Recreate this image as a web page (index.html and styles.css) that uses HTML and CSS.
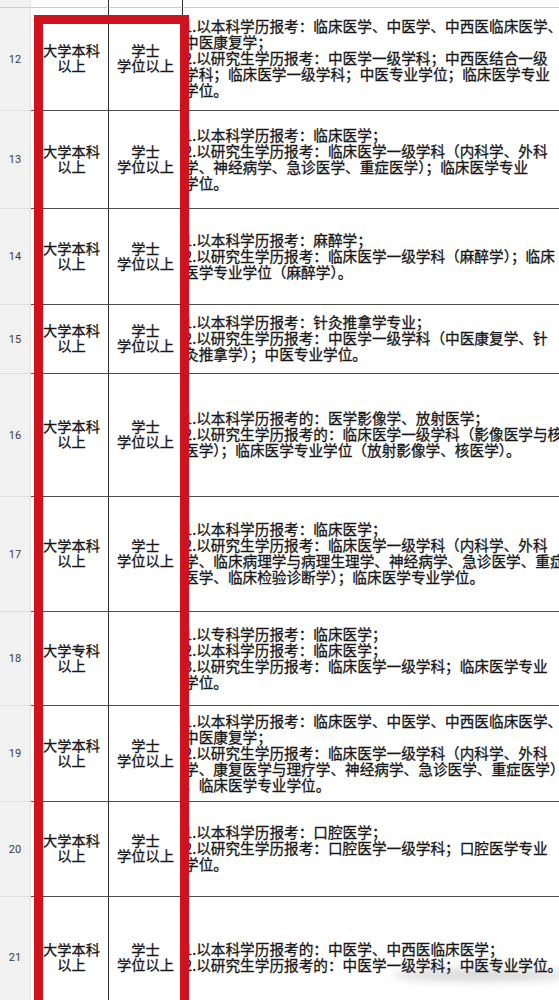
FILE: index.html
```html
<!DOCTYPE html>
<html lang="zh-CN">
<head>
<meta charset="utf-8">
<title>岗位条件表</title>
<link rel="stylesheet" href="styles.css">
</head>
<body>
<div class="sheet">
  <div class="grid">
    <div class="num head"></div><div class="cell c2 head"></div><div class="cell c3 head"></div><div class="cell c4 head"></div>

    <div class="num">12</div>
    <div class="cell c2">大学本科<br>以上</div>
    <div class="cell c3">学士<br>学位以上</div>
    <div class="cell c4"><p>1.以本科学历报考：临床医学、中医学、中西医临床医学、<br>中医康复学；<br>2.以研究生学历报考：中医学一级学科；中西医结合一级<br>学科；临床医学一级学科；中医专业学位；临床医学专业<br>学位。</p></div>

    <div class="num">13</div>
    <div class="cell c2">大学本科<br>以上</div>
    <div class="cell c3">学士<br>学位以上</div>
    <div class="cell c4"><p>1.以本科学历报考：临床医学；<br>2.以研究生学历报考：临床医学一级学科（内科学、外科<br>学、神经病学、急诊医学、重症医学）；临床医学专业<br>学位。</p></div>

    <div class="num">14</div>
    <div class="cell c2">大学本科<br>以上</div>
    <div class="cell c3">学士<br>学位以上</div>
    <div class="cell c4"><p>1.以本科学历报考：麻醉学；<br>2.以研究生学历报考：临床医学一级学科（麻醉学）；临床<br>医学专业学位（麻醉学）。</p></div>

    <div class="num">15</div>
    <div class="cell c2">大学本科<br>以上</div>
    <div class="cell c3">学士<br>学位以上</div>
    <div class="cell c4"><p>1.以本科学历报考：针灸推拿学专业；<br>2.以研究生学历报考：中医学一级学科（中医康复学、针<br>灸推拿学）；中医专业学位。</p></div>

    <div class="num">16</div>
    <div class="cell c2">大学本科<br>以上</div>
    <div class="cell c3">学士<br>学位以上</div>
    <div class="cell c4"><p>1.以本科学历报考的：医学影像学、放射医学；<br>2.以研究生学历报考的：临床医学一级学科（影像医学与核<br>医学）；临床医学专业学位（放射影像学、核医学）。</p></div>

    <div class="num">17</div>
    <div class="cell c2">大学本科<br>以上</div>
    <div class="cell c3">学士<br>学位以上</div>
    <div class="cell c4"><p>1.以本科学历报考：临床医学；<br>2.以研究生学历报考：临床医学一级学科（内科学、外科<br>学、临床病理学与病理生理学、神经病学、急诊医学、重症<br>医学、临床检验诊断学）；临床医学专业学位。</p></div>

    <div class="num">18</div>
    <div class="cell c2">大学专科<br>以上</div>
    <div class="cell c3"></div>
    <div class="cell c4"><p>1.以专科学历报考：临床医学；<br>2.以本科学历报考：临床医学；<br>3.以研究生学历报考：临床医学一级学科；临床医学专业<br>学位。</p></div>

    <div class="num">19</div>
    <div class="cell c2">大学本科<br>以上</div>
    <div class="cell c3">学士<br>学位以上</div>
    <div class="cell c4"><p>1.以本科学历报考：临床医学、中医学、中西医临床医学、<br>中医康复学；<br>2.以研究生学历报考：临床医学一级学科（内科学、外科<br>学、康复医学与理疗学、神经病学、急诊医学、重症医学）<br>；临床医学专业学位。</p></div>

    <div class="num">20</div>
    <div class="cell c2">大学本科<br>以上</div>
    <div class="cell c3">学士<br>学位以上</div>
    <div class="cell c4"><p>1.以本科学历报考：口腔医学；<br>2.以研究生学历报考：口腔医学一级学科；口腔医学专业<br>学位。</p></div>

    <div class="num">21</div>
    <div class="cell c2">大学本科<br>以上</div>
    <div class="cell c3">学士<br>学位以上</div>
    <div class="cell c4"><p>1.以本科学历报考的：中医学、中西医临床医学；<br>2.以研究生学历报考的：中医学一级学科；中医专业学位。</p></div>
  </div>

  <div class="highlight"></div>
  <div class="smudge"></div>
</div>
</body>
</html>
```

FILE: styles.css
```css
html, body {
  margin: 0;
  padding: 0;
  background: #ffffff;
}

.sheet {
  position: relative;
  width: 559px;
  height: 1000px;
  overflow: hidden;
  font-family: "Noto Sans CJK SC", "Noto Sans", sans-serif;
  color: #161616;
}

.grid {
  display: grid;
  grid-template-columns: 31px 78px 74px 600px;
  grid-template-rows: 8px 103px 98px 96px 69px 123px 115px 94px 96px 95px 122px;
}

.num {
  box-sizing: border-box;
  background: #f1f1f1;
  border-bottom: 1px solid #dedede;
  border-right: 1px solid #e2e2e2;
  display: flex;
  align-items: center;
  justify-content: center;
  font-family: Roboto, "Noto Sans", sans-serif;
  font-size: 11px;
  color: #3a3a3a;
}

.cell {
  box-sizing: border-box;
  border-bottom: 1px solid #4d4d4d;
  display: flex;
  align-items: center;
  -webkit-text-stroke: 0.3px #161616;
}

.head {
  border-bottom-color: #c9c9c9;
}

.c2, .c3 {
  justify-content: center;
  text-align: center;
  font-size: 14.2px;
  line-height: 15px;
  border-right: 1px solid #2e2e2e;
}

.c2 {
  padding-left: 4px;
  padding-bottom: 2px;
}

.c3 {
  padding-bottom: 2px;
}

.c4 {
  padding-left: 1px;
}

.c4 p {
  margin: 0 0 2px 0;
  white-space: nowrap;
  font-size: 14.65px;
  line-height: 16px;
}

.highlight {
  position: absolute;
  left: 34px;
  top: 15px;
  width: 155px;
  height: 1100px;
  box-sizing: border-box;
  border: 9px solid #d0121e;
}

.smudge {
  position: absolute;
  left: 392px;
  top: 969px;
  width: 175px;
  height: 12px;
  border-radius: 50%;
  background: rgba(0, 0, 0, 0.16);
  filter: blur(5px);
}
```
